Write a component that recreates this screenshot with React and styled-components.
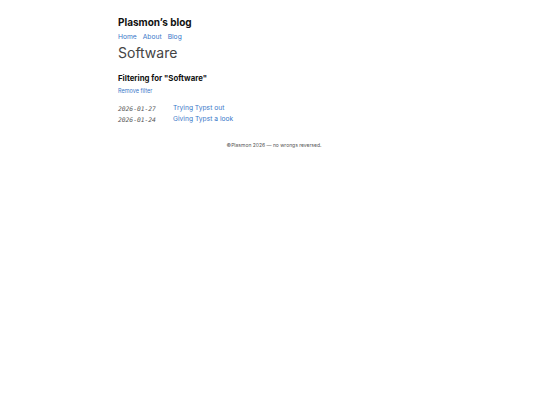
import React from 'react';
import styled, { createGlobalStyle } from 'styled-components';

const Global = createGlobalStyle`
  body {
    margin: 0;
    background: #fff;
    font-family: Inter, "Noto Sans", sans-serif;
    color: #222;
  }
`;

const Page = styled.div`
  box-sizing: border-box;
  max-width: 320px;
  margin: 0 auto;
  padding: 16px 0 0 8px;
`;

const Title = styled.h1`
  font-size: 10px;
  font-weight: 700;
  margin: 0;
  line-height: 12px;
  color: #111;
`;

const Nav = styled.nav`
  display: flex;
  gap: 6px;
  margin-top: 4.5px;
  font-size: 6.7px;
  line-height: 9px;
`;

const Link = styled.a`
  color: #3a78c9;
  text-decoration: none;
`;

const PageTitle = styled.h2`
  font-size: 14px;
  font-weight: 400;
  color: #444;
  margin: 2.5px 0 0;
  line-height: 18px;
`;

const Heading = styled.h3`
  font-size: 7.8px;
  font-weight: 700;
  margin: 11px 0 0;
  line-height: 10px;
  color: #111;
`;

const Filter = styled.div`
  margin-top: 4px;
  font-size: 5.5px;
  line-height: 8px;
`;

const Posts = styled.ul`
  list-style: none;
  margin: 7.5px 0 0;
  padding: 0;
  font-size: 6.7px;
  line-height: 11px;
`;

const Row = styled.li`
  display: flex;
  align-items: center;
  height: 11px;
`;

const Date = styled.span`
  font-family: "DejaVu Sans Mono", monospace;
  font-style: italic;
  font-size: 6.3px;
  color: #555;
  width: 55px;
`;

const Footer = styled.footer`
  text-align: center;
  font-size: 5px;
  line-height: 7px;
  color: #555;
  margin-top: 17px;
`;

const posts = [
  ['2026-01-27', 'Trying Typst out'],
  ['2026-01-24', 'Giving Typst a look'],
];

export default function App() {
  return (
    <>
      <Global />
      <Page>
        <Title>Plasmon’s blog</Title>
        <Nav>
          <Link href="#">Home</Link>
          <Link href="#">About</Link>
          <Link href="#">Blog</Link>
        </Nav>
        <PageTitle>Software</PageTitle>
        <Heading>Filtering for "Software"</Heading>
        <Filter><Link href="#">Remove filter</Link></Filter>
        <Posts>
          {posts.map(([d, t]) => (
            <Row key={d}>
              <Date>{d}</Date>
              <Link href="#">{t}</Link>
            </Row>
          ))}
        </Posts>
        <Footer>©Plasmon 2026 — no wrongs reversed.</Footer>
      </Page>
    </>
  );
}
